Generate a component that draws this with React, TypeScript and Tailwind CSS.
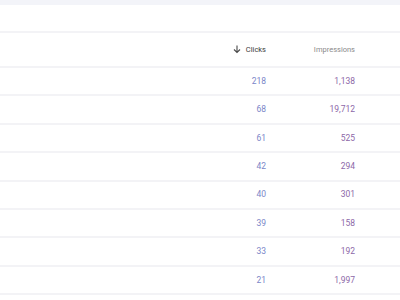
import React from 'react';

const rows = [
  { clicks: '218', impressions: '1,138' },
  { clicks: '68', impressions: '19,712' },
  { clicks: '61', impressions: '525' },
  { clicks: '42', impressions: '294' },
  { clicks: '40', impressions: '301' },
  { clicks: '39', impressions: '158' },
  { clicks: '33', impressions: '192' },
  { clicks: '21', impressions: '1,997' },
];

const ArrowDown = () => (
  <svg width="8" height="9" viewBox="0 0 8 9" fill="none">
    <path d="M4 0.5v7M1 4.5l3 3 3-3" stroke="#4a4a4a" strokeWidth="1.1" />
  </svg>
);

export default function App() {
  return (
    <div
      className="w-[400px] h-[300px] bg-white overflow-hidden text-[8.5px]"
      style={{ fontFamily: 'Roboto, "Liberation Sans", sans-serif' }}
    >
      <div className="h-[5px] bg-[#f3f4f9]" />
      <div className="h-[26px]" />
      <div className="h-[2px] bg-[#f3f3f6]" />

      <div className="h-[33px] flex items-center text-[7.5px]">
        <div className="flex-1" />
        <div className="w-[80px] flex items-center justify-end gap-[5px] text-[#3c3c3c]">
          <ArrowDown />
          <span>Clicks</span>
        </div>
        <div className="w-[89px] text-right text-[#8a8a8a]">
          Impressions
        </div>
        <div className="w-[45px]" />
      </div>

      {rows.map((row, i) => (
        <div key={i}>
          <div className="h-[2px] bg-[#f3f3f6]" />
          <div className="h-[26.4px] flex items-center">
            <div className="flex-1" />
            <div className="w-[80px] text-right text-[#7a86c8]">
              {row.clicks}
            </div>
            <div className="w-[89px] text-right text-[#8d68a8]">
              {row.impressions}
            </div>
            <div className="w-[45px]" />
          </div>
        </div>
      ))}
      <div className="h-[2px] bg-[#f3f3f6]" />
    </div>
  );
}
